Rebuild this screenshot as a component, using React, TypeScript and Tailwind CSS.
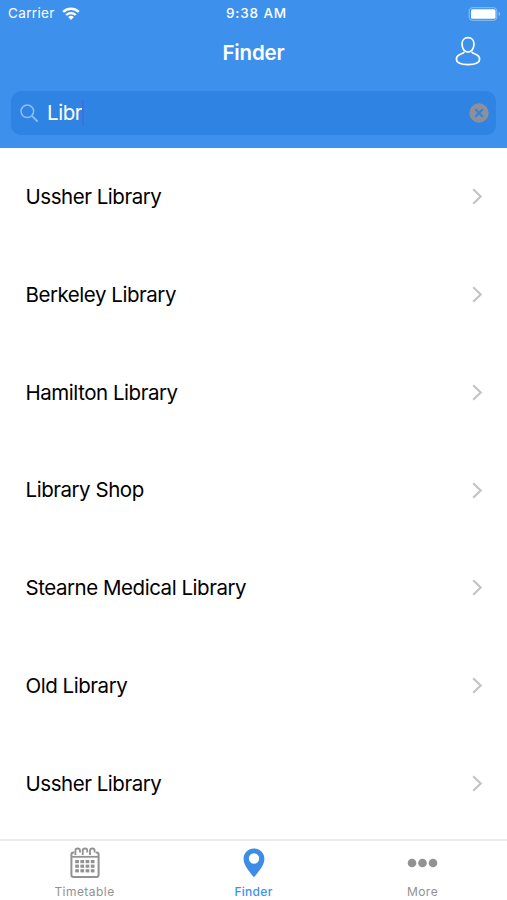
const places = [
  'Ussher Library',
  'Berkeley Library',
  'Hamilton Library',
  'Library Shop',
  'Stearne Medical Library',
  'Old Library',
  'Ussher Library',
];

function WifiIcon() {
  return (
    <svg width="18" height="13" viewBox="0 0 18 13" fill="none" stroke="#fff" strokeWidth="2.3">
      <path d="M1.2 4.9a11.2 11.2 0 0 1 15.6 0" />
      <path d="M4.2 8a6.9 6.9 0 0 1 9.6 0" />
      <path d="M9 12.9L6.2 10.1a4 4 0 0 1 5.600 0Z" fill="#fff" stroke="none" />
    </svg>
  );
}

function BatteryIcon() {
  return (
    <svg width="33" height="14" viewBox="0 0 33 14" fill="none">
      <rect x="1.200" y="0.7" width="27.600" height="12.600" rx="3.200" stroke="#8fc0f6" strokeWidth="1" />
      <rect x="3" y="2.200" width="24.500" height="9.600" rx="1.600" fill="#fff" />
      <path d="M30.700 5v4c.9-.4 1.400-1.100 1.400-2s-.5-1.600-1.400-2Z" fill="#8fc0f6" />
    </svg>
  );
}

function PersonIcon() {
  return (
    <svg width="26" height="30" viewBox="0 0 26 30" fill="none" stroke="#fff" strokeWidth="1.7" strokeLinejoin="round">
      <path d="M13 1.700c-3.700 0-6 2.700-6 6.300 0 4.300 2.500 8.200 6 8.200s6-3.900 6-8.200c0-3.600-2.300-6.300-6-6.300Z" />
      <path d="M9.300 15.900c-1.100 1.500-3.300 1.900-5.300 3-1.700.9-2.600 2.300-2.600 4.400 0 3.600 4.600 5.300 11.600 5.300s11.600-1.700 11.600-5.300c0-2.100-.9-3.500-2.600-4.400-2-1.100-4.200-1.500-5.300-3" />
    </svg>
  );
}

function CalendarIcon() {
  const columns = [7.2, 12.4, 17.6, 22.8];
  const rows = [14.6, 19.2, 23.8];
  return (
    <svg width="30" height="32" viewBox="0 0 30 32" fill="none" stroke="#929292">
      <path d="M4.300 5.400H3.500Q1.400 5.400 1.400 7.500V27.700Q1.400 29.900 3.500 29.900H26.500Q28.600 29.900 28.600 27.700V7.500Q28.600 5.400 26.500 5.400H25.700" strokeWidth="2" />
      <path d="M2 9.800h26" strokeWidth="1.800" />
      <path d="M5.400 8V3.800a2.300 2.300 0 0 1 4.600 0V5.600M12.700 8V3.800a2.300 2.300 0 0 1 4.600 0V5.600M20 8V3.800a2.300 2.300 0 0 1 4.600 0V5.600" strokeWidth="1.800" />
      {rows.map((y) =>
        columns.map((x) => (
          <rect key={`${x}-${y}`} x={x - 2} y={y - 1.6} width="3.700" height="3.200" fill="#929292" stroke="none" />
        )),
      )}
    </svg>
  );
}

export default function App() {
  return (
    <div className="flex h-[900px] w-[507px] flex-col overflow-hidden bg-white font-['Inter','Liberation_Sans',sans-serif] text-black">
      <header className="h-[148px] shrink-0 bg-[#3d91ed] text-white">
        <div className="grid h-[27px] grid-cols-3 items-center pl-2 pr-[6px]">
          <div className="flex items-center gap-[7px] text-[13.500px] tracking-[0.350px]">
            <span>Carrier</span>
            <WifiIcon />
          </div>
          <span className="pl-[4px] text-center text-[13.500px] font-medium tracking-[0.850px]">9:38 AM</span>
          <div className="flex justify-end">
            <BatteryIcon />
          </div>
        </div>
        <div className="grid h-[64px] grid-cols-[1fr_auto_1fr] items-start px-[26px]">
          <span />
          <h1 className="pt-[11px] text-[20.500px] font-semibold leading-[30px] tracking-[-0.150px]">Finder</h1>
          <button className="mt-[9px] justify-self-end" aria-label="Profile">
            <PersonIcon />
          </button>
        </div>
        <div className="mx-[11px] flex h-[44px] items-center rounded-[10px] bg-[#2f83e2] pl-[9px] pr-[7px]">
          <svg width="19" height="19" viewBox="0 0 19 19" fill="none" stroke="#8dc0f5" strokeWidth="1.500">
            <circle cx="7.300" cy="7.300" r="6.300" />
            <path d="M11.900 11.900l5.800 5.800" strokeWidth="1.900" />
          </svg>
          <span className="ml-[8px] text-[20.500px] leading-[28px] tracking-[-0.450px]">Libr</span>
          <span className="h-[26px] w-[2px] bg-[#416ee7]" />
          <svg className="ml-auto" width="20" height="20" viewBox="0 0 20 20">
            <circle cx="10" cy="10" r="9.700" fill="#8b9099" />
            <path d="M6.300 6.300l7.400 7.400M13.700 6.300l-7.400 7.400" stroke="#2f83e2" strokeWidth="2" />
          </svg>
        </div>
      </header>

      <main className="min-h-0 flex-1 overflow-hidden">
        <ul>
          {places.map((place, index) => (
            <li key={index} className="flex h-[97.750px] items-center justify-between pl-[25.500px] pr-6">
              <span className="pt-px text-[20.500px] tracking-[-0.460px]">{place}</span>
              <svg width="11" height="17" viewBox="0 0 11 17" fill="none" stroke="#c4c4c6" strokeWidth="2.200">
                <path d="M1.200 1.200L8.700 8.500L1.200 15.800" />
              </svg>
            </li>
          ))}
        </ul>
      </main>

      <nav className="grid h-[61px] shrink-0 grid-cols-3 border-t-2 border-[#ececec] bg-white text-[12px] tracking-[0.450px] text-[#929292]">
        <div className="flex flex-col items-center">
          <div className="flex h-[43px] items-start pt-[6px]">
            <CalendarIcon />
          </div>
          <span className="leading-[16px]">Timetable</span>
        </div>
        <div className="flex flex-col items-center text-[#3d91ed]">
          <div className="flex h-[43px] items-start pt-[7px]">
            <svg width="22" height="30" viewBox="0 0 22 30" fill="#3d8ce5">
              <path fillRule="evenodd" d="M11 .5C5.100.5.600 4.900.600 10.700.600 17.200 5.700 22.600 11 29.300 16.300 22.600 21.400 17.200 21.400 10.700 21.400 4.900 16.900.500 11 .500ZM11 5.300a5.200 5.200 0 1 1 0 10.400 5.200 5.200 0 0 1 0-10.400Z" />
            </svg>
          </div>
          <span className="font-medium leading-[16px] tracking-[0.300px]">Finder</span>
        </div>
        <div className="flex flex-col items-center">
          <div className="flex h-[43px] items-center pt-px">
            <svg width="32" height="10" viewBox="0 0 32 10" fill="#929292">
              <circle cx="5" cy="5" r="4.300" />
              <circle cx="15.500" cy="5" r="4.300" />
              <circle cx="26" cy="5" r="4.300" />
            </svg>
          </div>
          <span className="leading-[16px]">More</span>
        </div>
      </nav>
    </div>
  );
}
